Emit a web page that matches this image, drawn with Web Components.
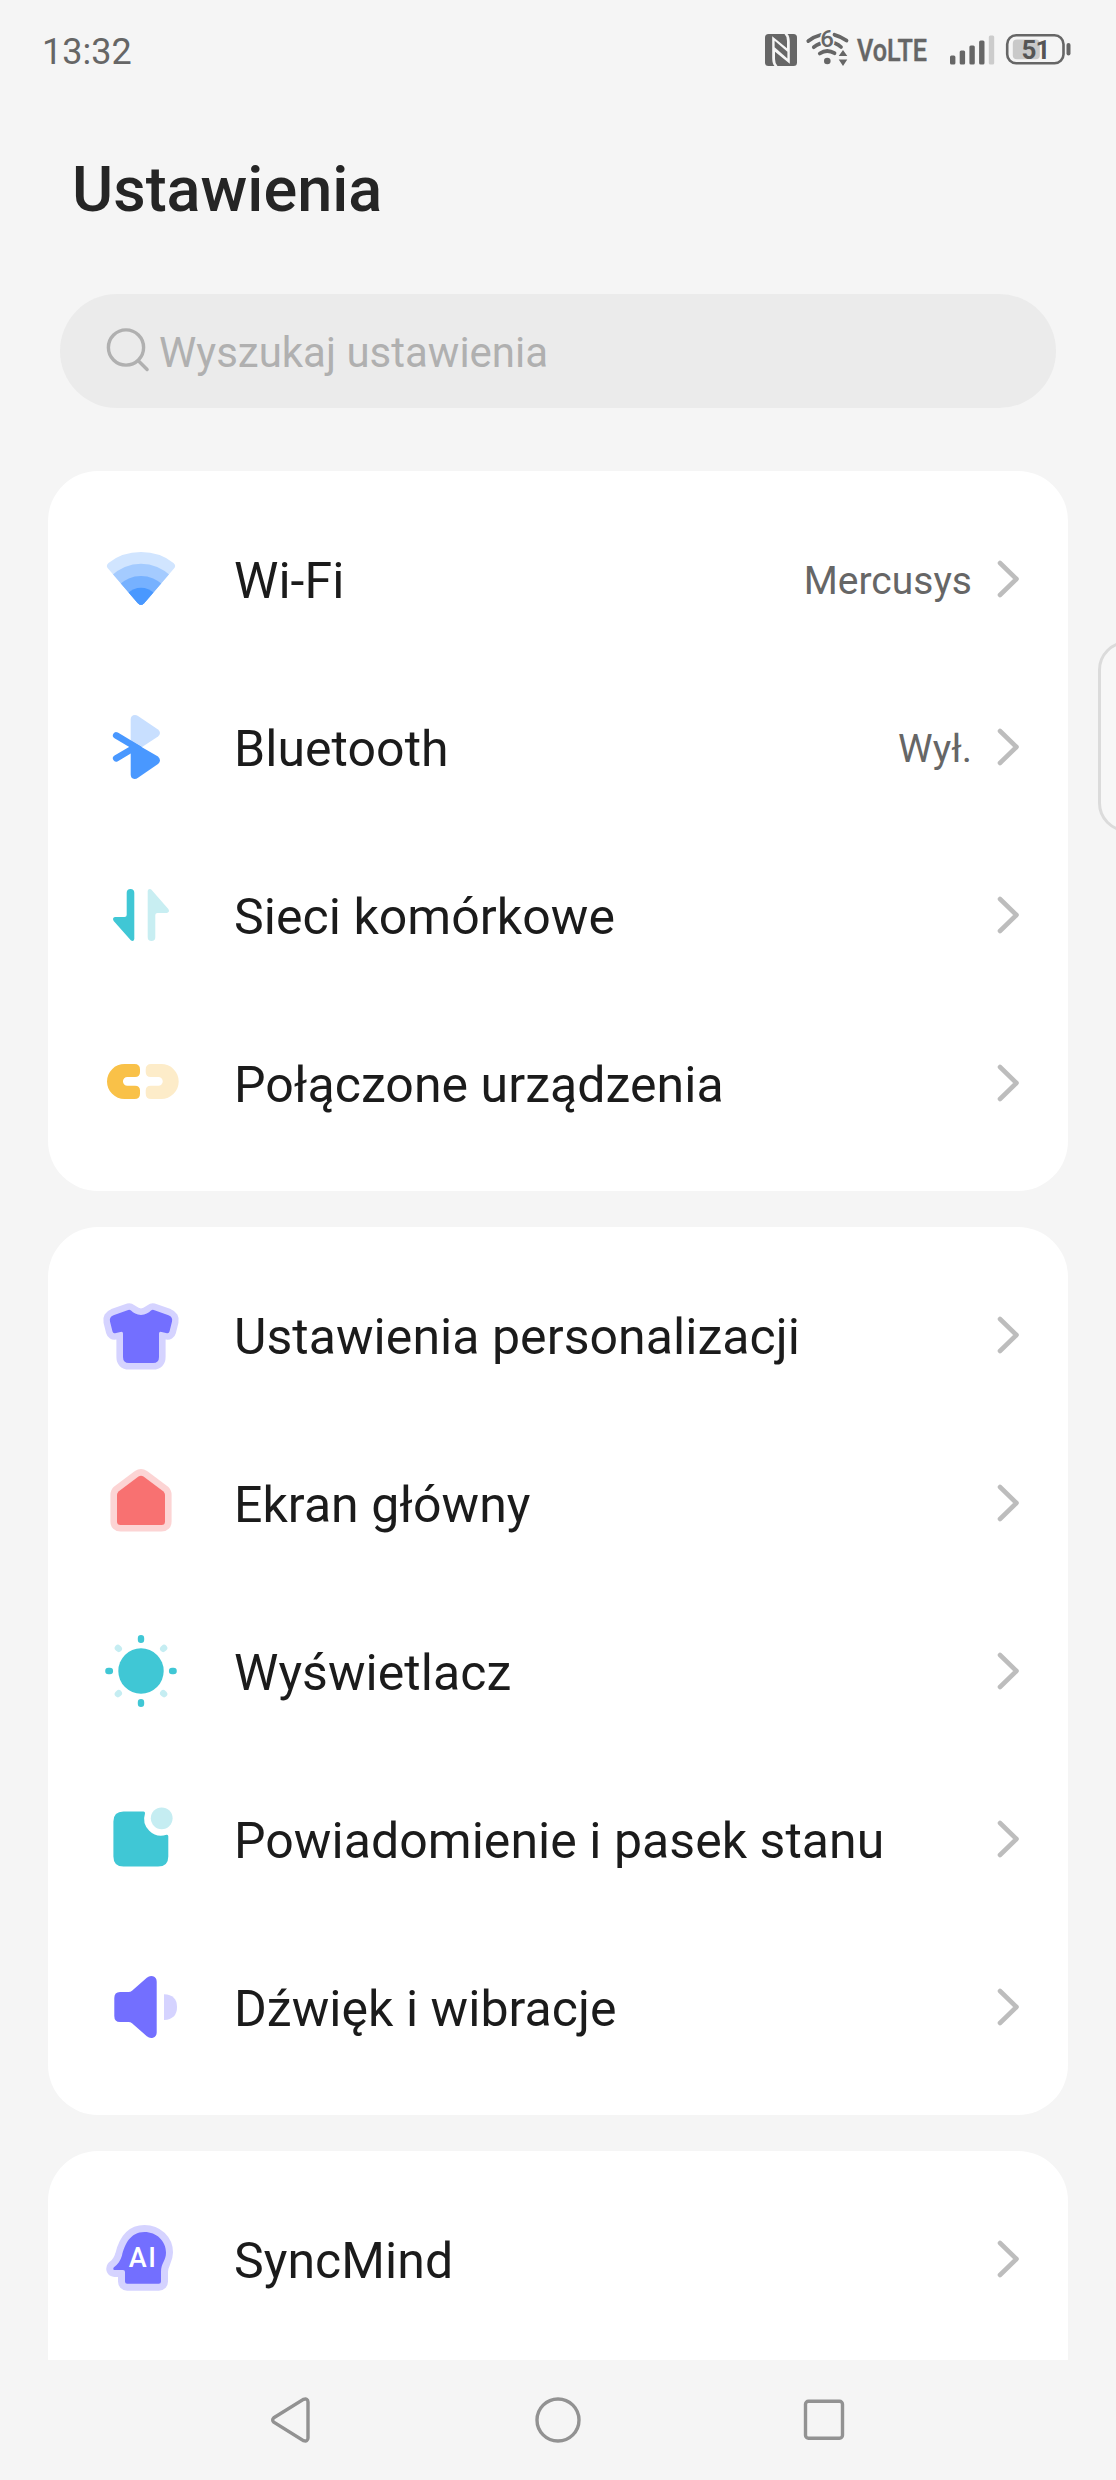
<!DOCTYPE html>
<html lang="pl">
<head>
<meta charset="utf-8">
<title>Ustawienia</title>
<style>
  body {
    margin: 0;
    background: #f5f5f5;
    font-family: Roboto, "Noto Sans", sans-serif;
  }
</style>
</head>
<body>
<settings-screen>
  <status-bar slot="status" time="13:32" battery="51"></status-bar>
  <search-field placeholder="Wyszukaj ustawienia"></search-field>

  <settings-group>
    <settings-row icon="wifi" value="Mercusys">Wi-Fi</settings-row>
    <settings-row icon="bluetooth" value="Wył.">Bluetooth</settings-row>
    <settings-row icon="cellular">Sieci komórkowe</settings-row>
    <settings-row icon="devices">Połączone urządzenia</settings-row>
  </settings-group>

  <settings-group>
    <settings-row icon="shirt">Ustawienia personalizacji</settings-row>
    <settings-row icon="home">Ekran główny</settings-row>
    <settings-row icon="display">Wyświetlacz</settings-row>
    <settings-row icon="notification">Powiadomienie i pasek stanu</settings-row>
    <settings-row icon="sound">Dźwięk i wibracje</settings-row>
  </settings-group>

  <settings-group class="last">
    <settings-row icon="ai">SyncMind</settings-row>
  </settings-group>

  <nav-bar slot="nav"></nav-bar>
</settings-screen>

<script>
const icons = {
  wifi: `
    <clipPath id="fan"><path d="M38.600 66 9 31.600Q6.400 28.500 9.500 26 23 15 42 15 61 15 74.500 26 77.600 28.500 75 31.600L45.400 66Q42 70 38.600 66Z"/></clipPath>
    <g clip-path="url(#fan)">
      <rect width="84" height="84" fill="#d1e5ff"/>
      <circle cx="42" cy="69" r="42.300" fill="#a4cbff"/>
      <circle cx="42" cy="70.900" r="31.900" fill="#76b1ff"/>
      <circle cx="42" cy="69.500" r="18.800" fill="#4998ff"/>
    </g>`,
  bluetooth: `
    <path fill="#c8dfff" d="M31.700 40V14.500Q31.700 10 36 10 37.500 10 39 11L59 24.500Q63 28 59 31.500L40 44Z"/>
    <path fill="none" stroke="#4998ff" stroke-width="6.600" stroke-linecap="round" d="M17.200 30.400 40 44M17.200 53.400 33 44"/>
    <path fill="#4998ff" d="M31.700 35.700 59 51.500Q63 55.500 59 59L39 72.800Q37.500 74 35.500 74 31.700 73.500 31.700 69.500Z"/>`,
  cellular: `
    <path fill="#40c7d5" d="M27.700 19.800a3.800 3.800 0 0 1 7.600 0V66Q34.800 69 32 67.600L14.700 48Q12.800 45 16 44.100H25.500Q27.700 44 27.700 42Z"/>
    <path fill="#c8eef2" d="M56.300 64.200a3.800 3.800 0 0 1-7.600 0V18Q49.200 15 52 16.300L69.300 36Q71.200 39 68 39.900H58.500Q56.300 40 56.300 42Z"/>`,
  devices: `
    <path fill="#f9c148" d="M25.500 23H35.500Q41 23 41 28.500V31Q41 36 36 36H28.300a4.300 4.300 0 0 0 0 8.700H36Q41 44.700 41 49.500V52.500Q41 58 35.500 58H25.500a17.500 17.500 0 0 1 0-35Z"/>
    <path fill="#fdecc9" d="M62.200 23H52.200Q46.700 23 46.700 28.500V31Q46.700 36 51.700 36H59.400a4.300 4.300 0 0 1 0 8.700H51.700Q46.700 44.700 46.700 49.500V52.500Q46.700 58 52.200 58H62.200a17.500 17.500 0 0 0 0-35Z"/>`,
  shirt: `
    <path fill="#d5d3ff" stroke="#d5d3ff" stroke-width="13.200" stroke-linejoin="round" d="M14.500 22.300 30.300 16.800C33 18 36 22 42 22S51 18 53.700 16.800L69.500 22.300Q74 24 73 28.500L70.500 38.500Q70 40.300 68 40L60 38.700V64Q60 70 54 70H30Q24 70 24 64V38.700L16 40Q14 40.300 13.500 38.500L11 28.500Q10 24 14.500 22.300Z"/>
    <path fill="#736fff" d="M14.500 22.300 28.500 17.200Q30.500 16.200 32 17.600C34.500 20 37.500 22 42 22S49.500 20 52 17.600Q53.500 16.200 55.500 17.200L69.500 22.300Q74 24 73 28.500L70.500 38.500Q70 40.500 68 40.200L61.500 38.800Q60 38.800 60 40.500V64Q60 70 54 70H30Q24 70 24 64V40.500Q24 38.800 22.500 38.800L16 40.200Q14 40.500 13.500 38.500L11 28.500Q10 24 14.500 22.300Z"/>`,
  home: `
    <path fill="#fcd4d4" stroke="#fcd4d4" stroke-width="13.200" stroke-linejoin="round" d="M39.500 15.600Q42 14 44.500 15.600L64.500 30.500Q66 32 66 34V60.500Q66 64 62.500 64H21.500Q18 64 18 60.500V34Q18 32 19.500 30.500Z"/>
    <path fill="#f87171" d="M39.500 15.600Q42 13.900 44.500 15.600L64.500 30.500Q66 32 66 34V60.500Q66 64 62.500 64H21.500Q18 64 18 60.500V34Q18 32 19.500 30.500Z"/>`,
  display: `
    <circle cx="42" cy="42" r="22.700" fill="#40c7d5"/>
    <g stroke="#40c7d5" stroke-width="6.400" stroke-linecap="round">
      <path d="M42 9.300v1.500M42 73.200v1.500M9.400 42h1.500M73.100 42h1.500"/>
      <path stroke="#c5edf2" d="m18.900 18.900.9.900M65.100 18.900l-.9.900M18.900 65.100l.9-.9M65.100 65.100l-.9-.9"/>
    </g>`,
  notification: `
    <path fill="#40c7d5" d="M24.500 14.400H44.500Q46.300 14.400 46 16.500A17 17 0 0 0 67.500 37.800Q69.300 37.500 69.300 39.300V59.500Q69.300 69.600 59 69.600H24.500Q14.400 69.600 14.400 59.500V24.500Q14.400 14.400 24.500 14.400Z"/>
    <circle cx="62.700" cy="21.300" r="10.900" fill="#c5edf2"/>`,
  sound: `
    <path fill="#736fff" d="M21 27H29.500Q31.500 27 33 25.800L47.800 12.800Q50.800 10.200 54 11.300 57.700 12.600 57.700 16.800V67.200Q57.700 71.400 54 72.700 50.800 73.800 47.800 71.200L33 58.200Q31.500 57 29.500 57H21Q15.300 57 15.300 51V33Q15.300 27 21 27Z"/>
    <path fill="#d5d3ff" d="M65 29.200Q78 29.700 78 42T65 55Z"/>`,
  ai: `
    <path fill="#d5d3ff" stroke="#d5d3ff" stroke-width="14" stroke-linejoin="round" d="M45.500 15C57.500 15 67 24 67 35.500 67 44 62 46 62 55V64.500Q62 66.700 59.800 66.700H28.200Q26 66.700 26 64.500V55Q26 53 24 53H15.500Q13.500 52.600 14.700 50.500C19 47.500 21.500 43.500 23 38.500 25.500 28 31 15 45.500 15Z"/>
    <path fill="#736fff" d="M45.500 15C57.500 15 67 24 67 35.500 67 44 62 46 62 55V64.500Q62 66.700 59.800 66.700H28.200Q26 66.700 26 64.500V55Q26 53 24 53H15.500Q13.500 52.600 14.700 50.500C19 47.500 21.500 43.500 23 38.500 25.500 28 31 15 45.500 15Z"/>
    <text x="29.800" y="49.600" font-size="27" font-weight="500" fill="#fff" textLength="27">AI</text>`
}

class SettingsScreen extends HTMLElement {
  constructor() {
    super()
    this.attachShadow({ mode: 'open' })
    this.shadowRoot.innerHTML = `
      <style>
        :host {
          display: flex;
          flex-direction: column;
          position: relative;
          width: 1116px;
          height: 2480px;
          overflow: hidden;
        }
        h1 {
          margin: 0 72px;
          height: 198px;
          font-size: 63px;
          font-weight: 500;
          line-height: 187px;
          color: #252525;
          box-sizing: border-box;
        }
        main {
          flex: 1;
          min-height: 0;
          overflow: hidden;
        }
        .groups {
          display: flex;
          flex-direction: column;
          gap: 36px;
        }
        ::slotted(.last) {
          min-height: 300px;
        }
        /* edge panel grip, floats over the page and runs off its right side */
        .grip {
          position: absolute;
          top: 641px;
          right: -42px;
          width: 60px;
          height: 191px;
          box-sizing: border-box;
          border: 3px solid #dbdbdb;
          border-radius: 29px;
          background: #f7f7f7;
        }
      </style>
      <slot name="status"></slot>
      <main>
        <h1>Ustawienia</h1>
        <div class="groups"><slot></slot></div>
      </main>
      <slot name="nav"></slot>
      <div class="grip"></div>
    `
  }
}

class StatusBar extends HTMLElement {
  constructor() {
    super()
    this.attachShadow({ mode: 'open' })
  }

  connectedCallback() {
    const bars = [9, 14, 19, 24, 29].map((h, i) => `
      <rect x="${i * 9.7}" y="${29.5 - h}" width="5.400" height="${h}" rx="1.500" fill="${i < 4 ? '#666' : '#ccc'}"/>
    `).join('')

    this.shadowRoot.innerHTML = `
      <style>
        :host {
          display: flex;
          justify-content: space-between;
          height: 96px;
          padding: 0 45px 0 42px;
          color: #666;
          font-size: 36px;
        }
        .time { line-height: 104px; }
        .icons {
          display: flex;
          align-items: flex-start;
          padding-top: 30px;
        }
        svg { display: block; overflow: visible; }
        .nfc { margin: 4px 9px 0 0; }
        .wifi { margin-right: 7px; }
        .signal { margin: 4.500px 11px 0 24px; }
        .battery { margin-top: 3.500px; }
      </style>
      <div class="time">${this.getAttribute('time')}</div>
      <div class="icons">
        <svg class="nfc" width="32" height="32">
          <rect width="32" height="32" rx="3.500" fill="#666"/>
          <path fill="#f5f5f5" d="M7.200 2.300 22 14.300V7Q22 2.300 19.500 0H22.500Q24.800 2.300 24.800 8V29.800L10 17.800V25Q10 29.700 12.500 32H9.500Q7.200 29.700 7.200 24Z"/>
          <path fill="#666" d="M9.600 6.800 22.400 17.700V24.500L9.600 13.300Z"/>
        </svg>
        <svg class="wifi" width="44" height="36" viewBox="0 0 44 36" fill="none" stroke="#666" stroke-width="3.800" stroke-linecap="round">
          <path d="M2.300 11Q8 6.600 14.500 5M28.500 4.800Q35 6.500 40.500 10.600M7.800 17.200Q10.500 14.800 14 13.600M29 13.300Q32.500 14.600 35 17"/>
          <path d="M13.800 23.500Q21 18.600 28.500 23.200"/>
          <circle cx="21.300" cy="31" r="3.300" fill="#666" stroke="none"/>
          <text x="14.300" y="16.600" font-size="24" font-weight="500" fill="#666" stroke="#f5f5f5" stroke-width="3" paint-order="stroke">6</text>
          <path fill="#666" stroke="none" d="M37 20 41.300 26H32.700ZM37 36 41.300 29.500H32.700Z"/>
        </svg>
        <svg width="69" height="36">
          <text x="0" y="31" font-size="31" font-weight="500" fill="#666" stroke="#666" stroke-width=".5" textLength="70" lengthAdjust="spacingAndGlyphs">VoLTE</text>
        </svg>
        <svg class="signal" width="45" height="30">${bars}</svg>
        <svg class="battery" width="65" height="31">
          <rect x="1.200" y="1.200" width="56.300" height="28" rx="9" fill="none" stroke="#666" stroke-width="2.600"/>
          <rect x="6.800" y="5.500" width="27" height="19.700" rx="4" fill="#c9c9c9"/>
          <rect x="60.500" y="9" width="4" height="12.500" rx="2" fill="#666"/>
          <text x="15.500" y="24.500" font-size="26" font-weight="700" fill="#555" textLength="29">${this.getAttribute('battery')}</text>
        </svg>
      </div>
    `
  }
}

class SearchField extends HTMLElement {
  constructor() {
    super()
    this.attachShadow({ mode: 'open' })
  }

  connectedCallback() {
    this.shadowRoot.innerHTML = `
      <style>
        :host {
          display: flex;
          align-items: center;
          gap: 7px;
          height: 114px;
          margin: 0 60px 27px;
          padding-left: 46px;
          box-sizing: border-box;
          border-radius: 57px;
          background: #ebebeb;
          color: #b0b0b0;
          font-size: 42px;
        }
        svg { margin-top: -2px; }
        span { padding-top: 3px; }
      </style>
      <svg width="46" height="46" viewBox="0 0 46 46" fill="none" stroke="#b0b0b0" stroke-width="3.400" stroke-linecap="round">
        <circle cx="20" cy="20.500" r="17.600"/>
        <path d="m32.800 34.300 8.300 8.200"/>
      </svg>
      <span>${this.getAttribute('placeholder')}</span>
    `
  }
}

class SettingsGroup extends HTMLElement {
  constructor() {
    super()
    this.attachShadow({ mode: 'open' })
    this.shadowRoot.innerHTML = `
      <style>
        :host {
          display: flex;
          flex-direction: column;
          margin: 0 48px;
          padding: 24px 0;
          border-radius: 50px;
          background: #fff;
        }
      </style>
      <slot></slot>
    `
  }
}

class SettingsRow extends HTMLElement {
  constructor() {
    super()
    this.attachShadow({ mode: 'open' })
  }

  connectedCallback() {
    const value = this.getAttribute('value')

    this.shadowRoot.innerHTML = `
      <style>
        :host {
          display: flex;
          align-items: center;
          height: 168px;
          padding: 0 48px 0 51px;
          color: #1b1b1b;
          font-size: 50px;
        }
        svg { flex: none; }
        .label {
          flex: 1;
          padding: 4px 0 0 51px;
          white-space: nowrap;
          letter-spacing: .05px;
        }
        .value {
          padding-top: 4px;
          margin-right: 24px;
          color: #666;
          font-size: 39px;
        }
      </style>
      <svg width="84" height="84" viewBox="0 0 84 84">${icons[this.getAttribute('icon')]}</svg>
      <div class="label"><slot></slot></div>
      ${value ? `<div class="value">${value}</div>` : ''}
      <svg width="24" height="40" fill="none" stroke="#bdbdbd" stroke-width="4.600" stroke-linecap="round" stroke-linejoin="round">
        <path d="M4 4 20.500 20 4 36"/>
      </svg>
    `
  }
}

class NavBar extends HTMLElement {
  constructor() {
    super()
    this.attachShadow({ mode: 'open' })
    this.shadowRoot.innerHTML = `
      <style>
        :host {
          display: grid;
          grid-template-columns: 52px 1fr 52px;
          justify-items: center;
          align-items: center;
          height: 120px;
          padding: 0 264px;
          background: #f5f5f5;
        }
        svg:first-child { justify-self: start; }
        svg:last-child { justify-self: start; }
      </style>
      <svg width="48" height="48" fill="none" stroke="#929292" stroke-width="3.400">
        <path d="M7.800 21.800 37.500 3.400Q41.800 2 42 6V42Q41.800 46 37.500 44.600L7.800 26.200Q5.500 24 7.800 21.800Z"/>
      </svg>
      <svg width="48" height="48" fill="none" stroke="#929292" stroke-width="3.400">
        <circle cx="24" cy="24" r="21"/>
      </svg>
      <svg width="48" height="48" fill="none" stroke="#929292" stroke-width="3.400">
        <rect x="5.500" y="5.300" width="37" height="37" rx="3"/>
      </svg>
    `
  }
}

customElements.define('settings-screen', SettingsScreen)
customElements.define('status-bar', StatusBar)
customElements.define('search-field', SearchField)
customElements.define('settings-group', SettingsGroup)
customElements.define('settings-row', SettingsRow)
customElements.define('nav-bar', NavBar)
</script>
</body>
</html>
